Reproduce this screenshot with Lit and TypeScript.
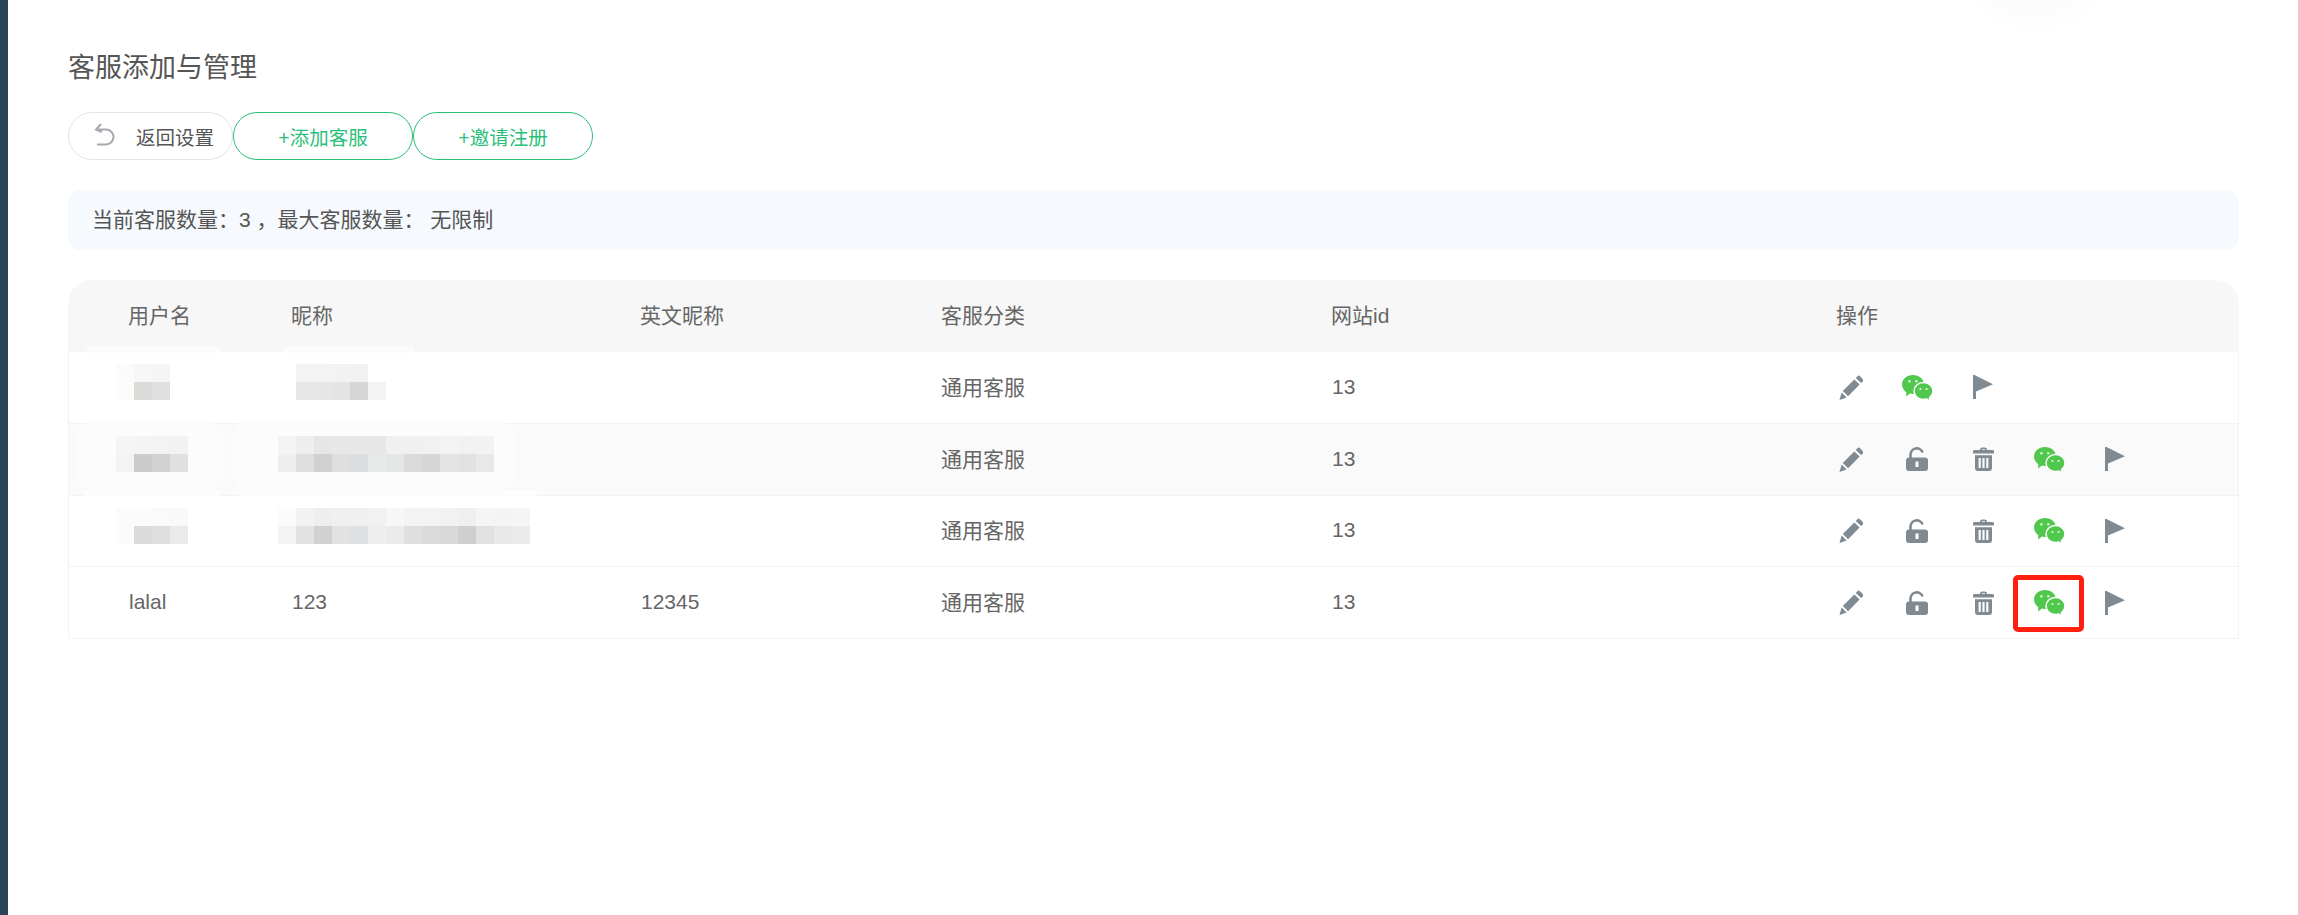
import { LitElement, html, css, svg } from "lit";
import { customElement } from "lit/decorators.js";

type Block = { x: number; y: number; c: string[] };
type Blob = { x: number; y: number; w: number; h: number; r: number; c: string };

// Mosaic masks laid over the hidden names, relative to the table's top-left corner.
const CELL = 18;
const g = (v: string) => `#${v}`;
const BLOCKS: Block[] = [
  { x: 48, y: 84, c: ["fbfbfb", "f7f7f7", "f5f5f5"] },
  { x: 48, y: 102, c: ["fcfcfa", "dcdbda", "dfe0e2"] },
  { x: 228, y: 84, c: ["f3f3f3", "f3f3f3", "f2f2f2", "f1f1f1"] },
  { x: 228, y: 102, c: ["e6e7e7", "e6e6e6", "e4e4e4", "d6d6d6", "f4f4f4"] },
  { x: 48, y: 156, c: ["f5f5f5", "f4f4f4", "f3f3f3", "f2f2f2"] },
  { x: 48, y: 174, c: ["f3f3f3", "cdccca", "d1d2d4", "e0e0e0"] },
  { x: 210, y: 156, c: ["f4f4f4", "eeeeee", "e6e6e6", "e7e7e7", "e7e7e7", "e7e7e7", "f0f0f0", "f0f0f0", "f1f1f1", "f3f3f3", "f1f1f1", "f2f2f2"] },
  { x: 210, y: 174, c: ["eeeeee", "dedede", "cfd0d2", "e1dfdd", "dcdde0", "e8e9e9", "e5e6e6", "dadada", "d5d6d6", "e4e4e4", "e2e2e0", "e8e8e8"] },
  { x: 48, y: 228, c: ["fbfbfb", "fbfbfb", "fafafa", "f9f9f7"] },
  { x: 48, y: 246, c: ["fbfbfb", "dcdbd9", "dddee0", "eaeaea"] },
  { x: 210, y: 228, c: ["fbfbf9", "f2f2f2", "eeeeee", "f0f0f0", "f0f0f0", "f1f1f1", "f7f7f7", "f3f3f3", "f3f3f3", "f1f1f1", "efefed", "f5f5f5", "f4f4f4", "f5f5f5"] },
  { x: 210, y: 246, c: ["f3f3f1", "e2e2e2", "d1d1d1", "e3e2e0", "dfe0e2", "eeeeee", "ebebe9", "dedfdf", "dbdbdb", "d9d9d9", "cfcfcd", "e0e2e2", "e9e9e9", "ebebeb"] },
];
// Faint glow of the mosaic: only visible where it crosses a tinted row.
const BLOBS: Blob[] = [
  { x: 18, y: 66, w: 134, h: 7, r: 6, c: "fcfcfc" },
  { x: 216, y: 66, w: 130, h: 7, r: 6, c: "fcfcfc" },
  { x: 8, y: 140, w: 148, h: 71, r: 22, c: "fcfcfc" },
  { x: 162, y: 140, w: 286, h: 71, r: 22, c: "fcfcfc" },
  { x: 16, y: 210, w: 138, h: 7, r: 6, c: "fdfdfd" },
  { x: 170, y: 210, w: 300, h: 7, r: 6, c: "fdfdfd" },
];

const pencil = svg`<svg class="ic" width="24" height="25" viewBox="0 0 24 25"><path d="M0.5 25 L2.6 17.6 L7.6 22.6 Z M3.8 16 L15.3 4.4 L20.6 9.6 L9.1 21.2 Z M16.8 2.9 L18.6 1.1 Q19.7 0 20.8 1.1 L23.9 4.2 Q25 5.3 23.9 6.4 L22.1 8.1 Z"/></svg>`;
const lock = svg`<svg class="ic" width="22" height="24" viewBox="0 0 22 24"><path d="M4.500 11 V7.500 a6.300 6.300 0 0 1 12.200 -2" fill="none" stroke="#7f8a92" stroke-width="2.600"/><path fill-rule="evenodd" d="M3 10.500 H19 Q22 10.500 22 13.500 V21 Q22 24 19 24 H3 Q0 24 0 21 V13.500 Q0 10.500 3 10.500 Z M9.500 14.500 V20 H12.500 V14.500 Z"/></svg>`;
const trash = svg`<svg class="ic" width="21" height="24" viewBox="0 0 21 24"><path fill-rule="evenodd" d="M7 3 Q7 .5 9 .5 H12 Q14 .5 14 3 H19.500 Q21 3 21 4.500 V6.600 H0 V4.500 Q0 3 1.500 3 Z M9 2.200 V3 H12 V2.200 Z M2 8.200 H19 V21 Q19 24 16 24 H5 Q2 24 2 21 Z M5.600 11 V21 H7.800 V11 Z M9.400 11 V21 H11.600 V11 Z M13.200 11 V21 H15.400 V11 Z"/></svg>`;
const flag = svg`<svg class="ic" width="20" height="24" viewBox="0 0 20 24"><path d="M0 0 H1.500 L20 9.300 L3 16.600 V24 H0 Z"/></svg>`;
const wechat = svg`<svg class="wx" width="31" height="25" viewBox="0 0 31 25"><path d="M11 0 C17 0 22 4 22 9.500 C22 15 17 19 11 19 C10 19 9 19 8 18.600 L4 21.500 L4.400 17.200 C1.700 15.400 0 12.700 0 9.500 C0 4 5 0 11 0 Z"/><ellipse class="wx-ring" cx="21.500" cy="16" rx="9.500" ry="8.500"/><path d="M24.500 22.800 L27 24.800 L26.700 21.600 Z"/><circle class="wx-eye" cx="7.400" cy="6.200" r="1.200"/><circle class="wx-eye" cx="14.400" cy="6.200" r="1.200"/><circle class="wx-eye" cx="18.400" cy="14" r="1.100"/><circle class="wx-eye" cx="24.600" cy="14" r="1.100"/></svg>`;

type Row = { user?: string; nick?: string; en?: string; full: boolean; mark?: boolean };
const ROWS: Row[] = [
  { full: false },
  { full: true },
  { full: true },
  { user: "lalal", nick: "123", en: "12345", full: true, mark: true },
];

@customElement("app-root")
export class AppRoot extends LitElement {
  static styles = css`
    :host {
      display: block;
      height: 915px;
      background: #fff;
      font-family: "Liberation Sans", "Noto Sans CJK SC", sans-serif;
      color: #666;
      overflow: hidden;
    }
    .page { display: flex; height: 100%; position: relative; }
    .side { width: 8px; flex: none; background: #264358; }
    .main { flex: 1; padding: 45px 59px 0 60px; min-width: 0; }
    .glow {
      position: absolute; left: 1985px; top: -30px; width: 100px; height: 46px;
      border-radius: 50%; background: #fbfbfb; filter: blur(10px);
    }
    h1 {
      margin: 0; height: 46px; line-height: 46px;
      font-size: 27px; font-weight: 400; color: #555;
    }
    .btns { display: flex; gap: 0; margin-top: 21px; }
    .btn {
      box-sizing: border-box; height: 48px; border-radius: 24px;
      display: flex; align-items: center; justify-content: center;
      font-size: 19.500px; background: #fff; padding-top: 1px;
    }
    .back { width: 165px; border: 1px solid #e3e3e8; color: #555; gap: 20px; padding-left: 7px; padding-top: 0; }
    .back span { padding-top: 1px; }
    .back svg { fill: none; stroke: #a6a9ae; stroke-width: 2; margin-bottom: 4px; }
    .green { width: 180px; border: 1px solid #2bc07a; color: #2bc07a; }
    .alert {
      margin-top: 30px; height: 60px; box-sizing: border-box; padding-left: 24px;
      border-radius: 12px; background: #f6fafe; line-height: 60px;
      font-size: 21px; color: #555; white-space: pre;
    }
    .table {
      margin-top: 30px; position: relative;
      font-size: 21px;
    }
    .r {
      display: grid; grid-template-columns: 223px 349px 301px 390px 487px 421px;
      align-items: center; height: 71.750px; box-sizing: border-box;
      border-left: 1px solid #f3f3f3; border-right: 1px solid #f3f3f3;
      border-bottom: 1px solid #f3f3f3;
      --row: #fff; background: var(--row);
    }
    .r > div { min-width: 0; margin-top: -3px; }
    .r > div:first-child { padding-left: 60px; }
    .r > .num { margin-top: -1px; }
    .r > .cat { margin-left: -1px; }
    .r.head {
      height: 72px; background: #f7f7f7; border: none; border-radius: 24px 24px 0 0;
    }
    .r.head > div { margin-top: -5px; }
    .head > div:last-child { padding-left: 18px; }
    .alt { --row: #fafafa; }
    .r > .acts { display: flex; align-items: center; margin-top: 0; margin-left: -1px; }
    .a {
      width: 66px; flex: none; display: flex; align-items: center; justify-content: center;
      position: relative; height: 30px; filter: blur(0.4px);
    }
    .ic { fill: #7f8a92; display: block; }
    .wx { fill: #50c74d; display: block; }
    .wx-ring { fill: #50c74d; stroke: var(--row); stroke-width: 1.500; }
    .wx-eye { fill: #dff5de; }
    .mark {
      position: absolute; left: -3px; top: -13px; width: 71px; height: 57px; box-sizing: border-box;
      border: 5px solid #ff1f10; border-radius: 5px;
    }
    .overlay { position: absolute; left: 0; top: 0; pointer-events: none; }
    .bl, .cell { position: absolute; display: block; }
    .bl { filter: blur(1px); }
    .cell { width: 18px; height: 18px; }
  `;

  private rowTpl(r: Row, i: number) {
    return html`<div class="r ${i === 1 ? "alt" : ""}">
      <div class="num">${r.user ?? ""}</div>
      <div class="num">${r.nick ?? ""}</div>
      <div class="num">${r.en ?? ""}</div>
      <div class="cat">通用客服</div>
      <div class="num">13</div>
      <div class="acts">
        <span class="a">${pencil}</span>
        ${r.full ? html`<span class="a">${lock}</span><span class="a">${trash}</span>` : ""}
        <span class="a">${wechat}${r.mark ? html`<i class="mark"></i>` : ""}</span>
        <span class="a">${flag}</span>
      </div>
    </div>`;
  }

  render() {
    return html`<div class="page">
      <div class="side"></div>
      <div class="glow"></div>
      <div class="main">
        <h1>客服添加与管理</h1>
        <div class="btns">
          <div class="btn back">
            <svg width="22" height="23" viewBox="0 0 22 23"><path d="M7 1 L2 6.500 L8 9 M2.500 6.500 H12 a7.500 7.500 0 0 1 0 15 H3"/></svg>
            <span>返回设置</span>
          </div>
          <div class="btn green">+添加客服</div>
          <div class="btn green">+邀请注册</div>
        </div>
        <div class="alert">当前客服数量：3 ，最大客服数量： 无限制</div>
        <div class="table">
          <div class="r head">
            <div>用户名</div><div>昵称</div><div>英文昵称</div><div>客服分类</div><div>网站id</div><div>操作</div>
          </div>
          ${ROWS.map((r, i) => this.rowTpl(r, i))}
          <div class="overlay">
            ${BLOBS.map(
              (b) => html`<i class="bl" style="left:${b.x}px;top:${b.y}px;width:${b.w}px;height:${b.h}px;border-radius:${b.r}px;background:${g(b.c)}"></i>`
            )}
            ${BLOCKS.map((b) =>
              b.c.map(
                (c, k) => html`<i class="cell" style="left:${b.x + k * CELL}px;top:${b.y}px;background:${g(c)}"></i>`
              )
            )}
          </div>
        </div>
      </div>
    </div>`;
  }
}
